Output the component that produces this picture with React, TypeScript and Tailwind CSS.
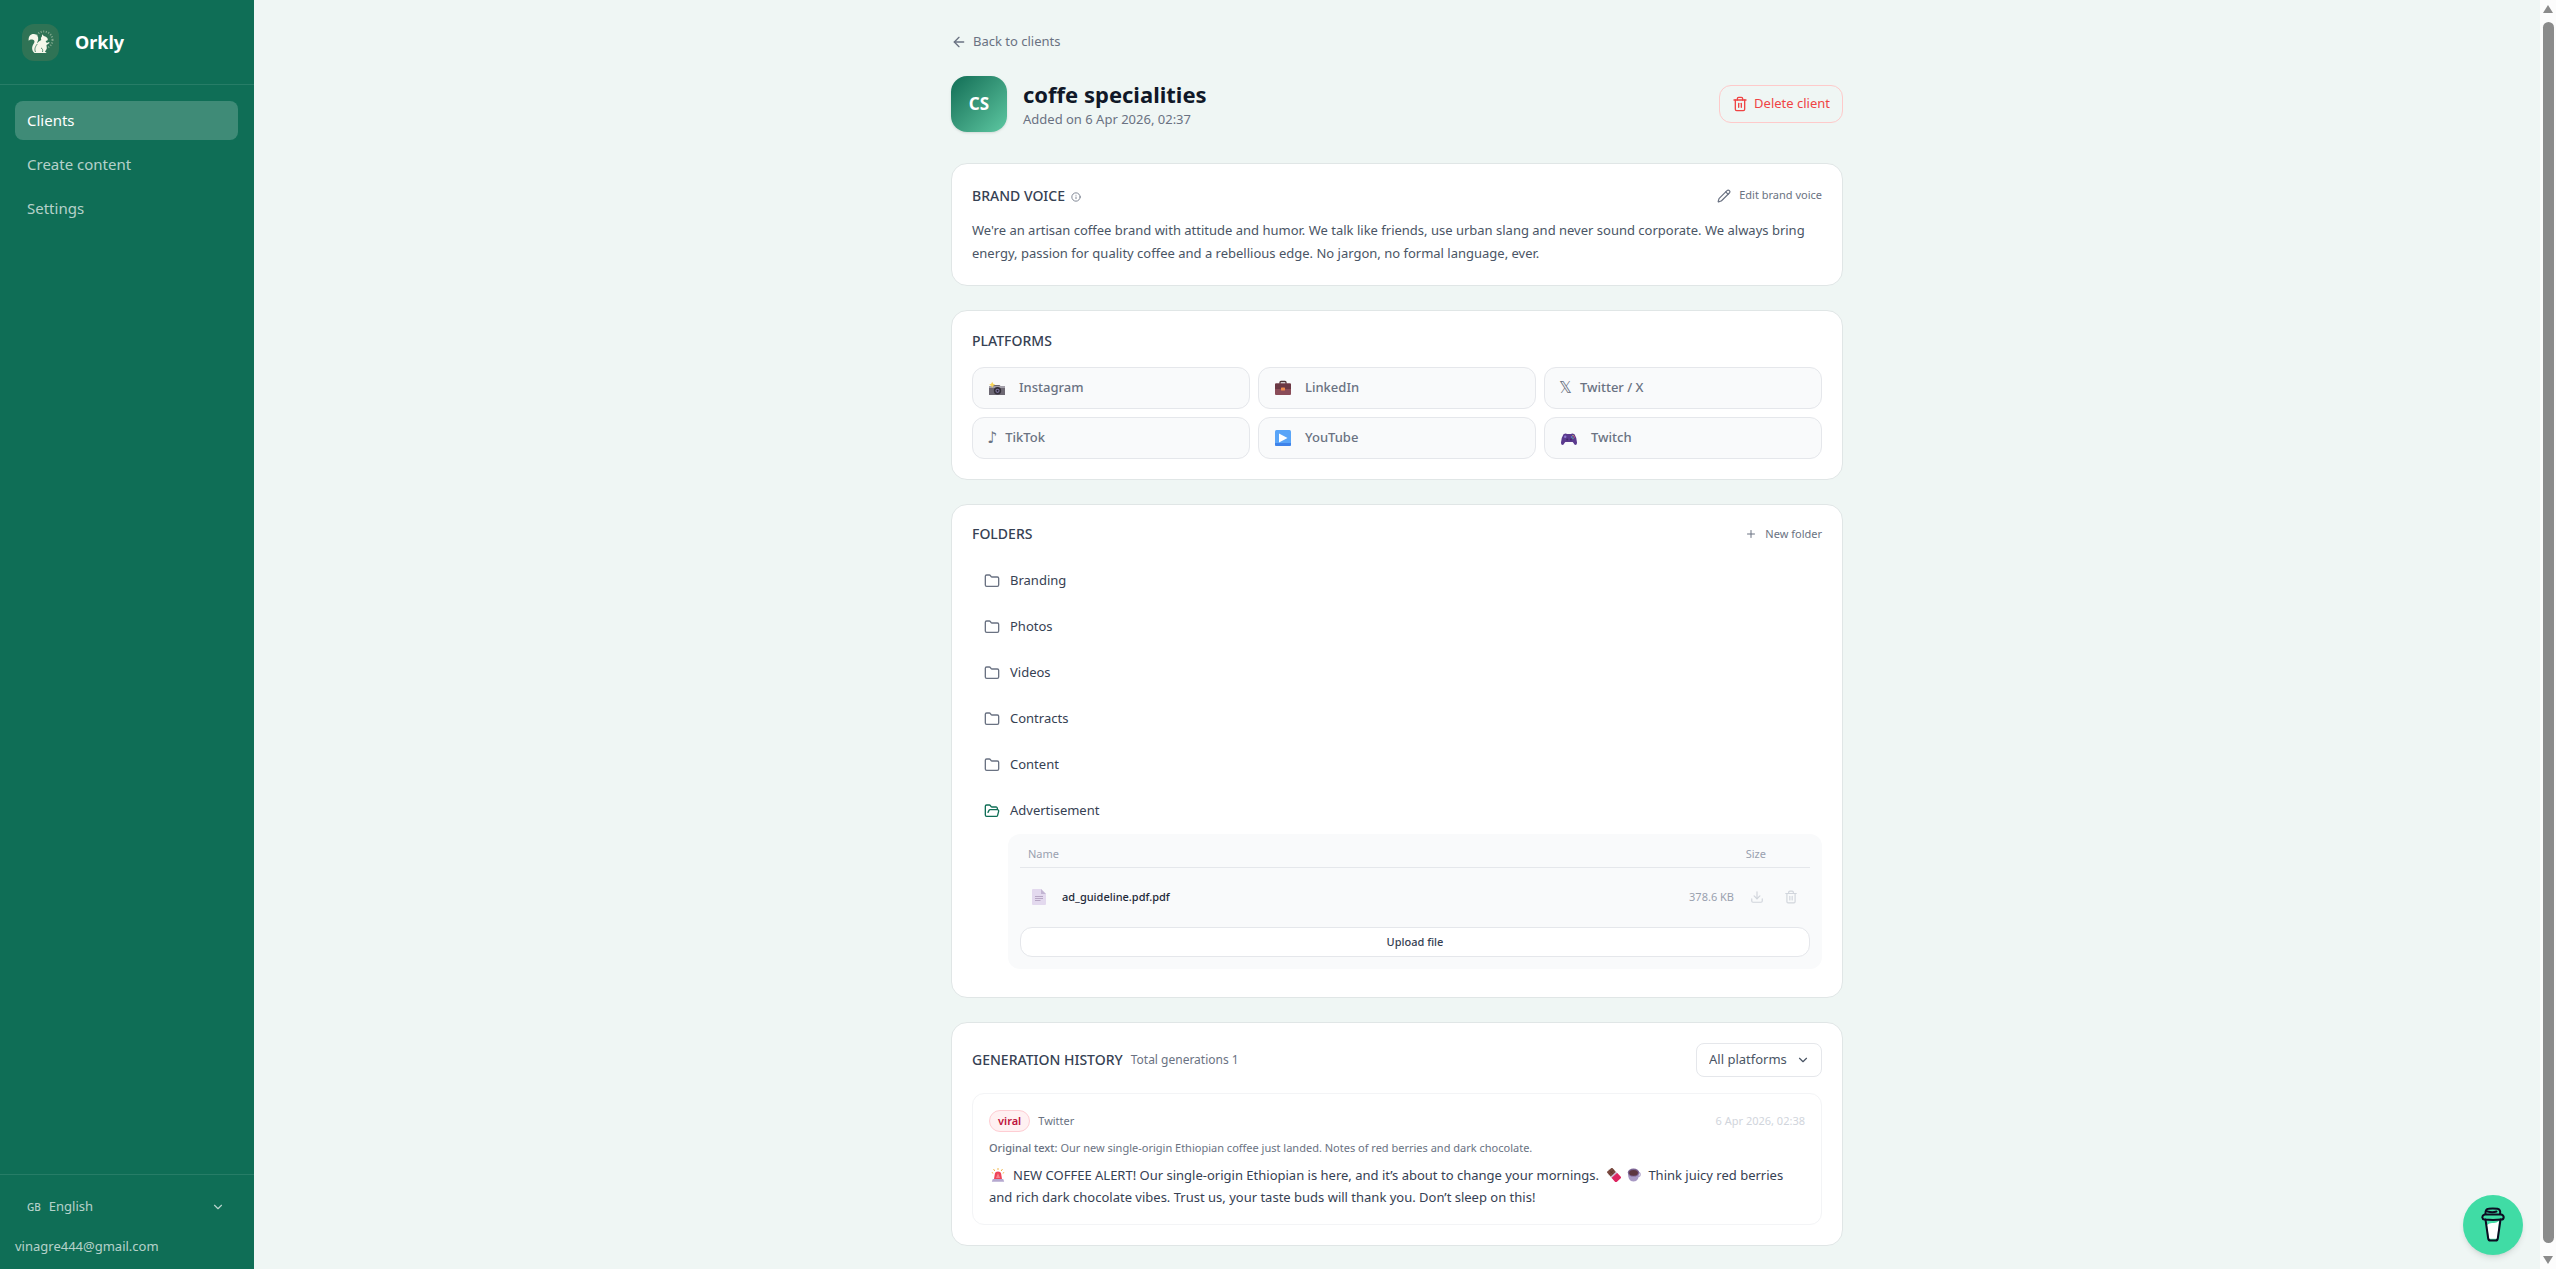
import type { ReactNode } from "react";
import {
  ArrowLeft,
  ChevronDown,
  Download,
  Folder,
  FolderOpen,
  Info,
  Pencil,
  Plus,
  Trash2,
} from "lucide-react";

function SquirrelLogo() {
  return (
    <svg viewBox="0 0 37 37" className="size-[37px]" aria-hidden="true">
      <rect width="37" height="37" rx="12" fill="#2f7355" />
      <circle cx="22" cy="16" r="8.500" fill="none" stroke="#b9cdb4" strokeWidth="2" strokeDasharray="1 1.600" strokeOpacity=".6" />
      <path
        d="M12.500 29c-3-2.500-3-6.500-.7-9.500 1.200-2 .8-3.300-.8-3.800-2-.4-3.300.2-4.300 1.100C6.200 12.500 8.500 9.800 12 10c3 .3 4.500 2.500 4.200 5.200-.2 1.800-1 3-1.200 4.300 1-1.500 2.500-2.800 4.300-3.500-.6-1.300-.4-2.700.6-3.500l.3-2.200 1.600 1.600c2.200.4 3.700 1.600 4 3.300.1 1-.8 1.600-2.200 1.700l1.200 2.200 2.300-1 .4 1-3 1.800.2 2.600c0 1.800-.8 3-1.800 4l1.800 1.500Z"
        fill="#f6f7ea"
      />
      <path d="M13.500 28c-1.500-3 .2-6 1.800-8M19 24c1.500.5 2 2 1.500 4" fill="none" stroke="#2f7355" strokeWidth=".8" />
    </svg>
  );
}

function CameraEmoji() {
  return (
    <svg viewBox="0 0 16 16" className="size-4" aria-hidden="true">
      <path d="M0 6h3.500l1-1h6l1 1H16v9H0z" fill="#6d6873" />
      <path d="M0 6h16v2H0z" fill="#a39fa9" />
      <circle cx="8.500" cy="10.800" r="3.700" fill="#35313b" />
      <circle cx="8.500" cy="10.800" r="2.100" fill="#8078a0" />
      <circle cx="8.500" cy="10.800" r="1" fill="#24202c" />
      <path d="M3.200 1.800l1 2 2 1-2 1-1 2-1-2-2-1 2-1z" fill="#f8d65a" />
    </svg>
  );
}

function BriefcaseEmoji() {
  return (
    <svg viewBox="0 0 16 16" className="size-4" aria-hidden="true">
      <path d="M5 4V2.500Q5 1.500 6 1.500h4q1 0 1 1V4" fill="none" stroke="#4e3537" strokeWidth="1.300" />
      <rect y="3.500" width="16" height="11.500" rx="1" fill="#8a4c58" />
      <path d="M0 4.500q0-1 1-1h14q1 0 1 1V9H0z" fill="#6b3844" />
      <rect x="6" y="7.500" width="4" height="3" rx=".6" fill="#ef8a4b" />
    </svg>
  );
}

function PlayEmoji() {
  return (
    <svg viewBox="0 0 16 16" className="size-4" aria-hidden="true">
      <rect width="16" height="16" rx="1.500" fill="#5aa5f8" />
      <path d="M0 13h16v1.500q0 1.500-1.500 1.500h-13Q0 16 0 14.500z" fill="#3f83ea" />
      <path d="M4 3.500v9L12.500 8z" fill="#fff" />
    </svg>
  );
}

function GamepadEmoji() {
  return (
    <svg viewBox="0 0 16 16" className="size-4" aria-hidden="true">
      <path d="M2.500 4.200Q5 2.800 6 4h4q1-1.200 3.500.2Q15.500 7 16 12.500q.1 2.500-1.600 2.500-1 0-1.900-1.900L11.600 12H4.400l-.9 1.100Q2.600 15 1.600 15-.1 15 0 12.500.5 7 2.500 4.200z" fill="#5b3a8e" />
      <circle cx="4.200" cy="6.800" r="1.200" fill="#8f7bd0" />
      <circle cx="6.200" cy="9.400" r="1" fill="#402a6b" />
      <circle cx="9.900" cy="9.400" r="1" fill="#402a6b" />
      <circle cx="12" cy="5.600" r=".7" fill="#e9c85a" />
      <circle cx="13.200" cy="7" r=".7" fill="#e5567b" />
      <circle cx="10.800" cy="7" r=".7" fill="#4fb0ea" />
      <circle cx="12" cy="8.200" r=".7" fill="#58c08a" />
    </svg>
  );
}

function SirenEmoji() {
  return (
    <svg viewBox="0 0 14 14" className="mr-2 ml-0.5 inline-block size-[14px] align-[-2px]" role="img" aria-label="Siren">
      <path d="M7 0v2M2.500 1l1.300 2M11.500 1l-1.300 2M.8 4.500l1.500.7M13.200 4.500l-1.500.7" stroke="#f0b84d" strokeWidth="1" />
      <path d="M3 11l.9-5.500Q4.200 3.500 7 3.500t3.100 2L11 11z" fill="#ee4458" />
      <path d="M7 5l2 5H5z" fill="#f9828b" />
      <path d="M1.800 11h10.400l1 2.800H.8z" fill="#b5a8cf" />
    </svg>
  );
}

function ChocolateEmoji() {
  return (
    <svg viewBox="0 0 14 14" className="mr-1.5 ml-2 inline-block size-[14px] align-[-2px]" role="img" aria-label="Chocolate bar">
      <g transform="rotate(-42 7 7)">
        <rect x="3.500" y="0" width="7" height="6.500" rx=".8" fill="#7a4a40" />
        <path d="M3.500 3.200h7M7 0v6.500" stroke="#5c342c" strokeWidth=".7" />
        <rect x="3.200" y="6" width="7.600" height="2" fill="#c9bfd6" />
        <rect x="3.200" y="7.500" width="7.600" height="6.500" rx=".6" fill="#dd2560" />
      </g>
    </svg>
  );
}

function CoffeeEmoji() {
  return (
    <svg viewBox="0 0 14 14" className="mr-1 inline-block size-[14px] align-[-2px]" role="img" aria-label="Hot beverage">
      <circle cx="11" cy="6.500" r="2.200" fill="none" stroke="#b3a6cc" strokeWidth="1.200" />
      <path d="M1 4.500h11q.5 9-5.500 9T1 4.500z" fill="#a899c4" />
      <ellipse cx="6.500" cy="4.600" rx="5.700" ry="4" fill="#7b6391" />
      <ellipse cx="6.500" cy="4.800" rx="4.500" ry="2.900" fill="#5d3740" />
    </svg>
  );
}

function PageEmoji() {
  return (
    <svg viewBox="0 0 14 16" className="h-4 w-[14px]" aria-hidden="true">
      <path d="M0 1q0-1 1-1h8l5 5v10q0 1-1 1H1q-1 0-1-1z" fill="#e3d9ee" />
      <path d="M9 0l5 5H9z" fill="#c3b5d3" />
      <path d="M3 7.500h8M3 9.500h8M3 11.500h5.500" stroke="#b7a6c4" strokeWidth="1" />
    </svg>
  );
}

function CupIcon() {
  return (
    <svg viewBox="0 0 24 36" className="h-9 w-6" fill="none" stroke="#0d0c22" strokeWidth="2" strokeLinecap="round" strokeLinejoin="round" aria-hidden="true">
      <path d="M6 18q3-2.500 6-2t6-2l-1.800 17.700H8z" fill="#fff" stroke="none" />
      <path d="M4.500 12.500l2.700 19q.3 2 2.300 2h5q2 0 2.300-2l2.700-19" />
      <path d="M3.500 7.500h17q2.300 1 2.200 3-.3 2-2.200 2-8.500.8-17 0-2-.3-2.200-2.200 0-2 2.200-2.800z" />
      <path d="M4.500 6.500Q4.300 2 7.500 1.700q4-.6 9 0Q20 2.500 19 7M6.500 4.500q5 1.300 9 0" />
    </svg>
  );
}

function Card({ children }: { children: ReactNode }) {
  return (
    <section className="rounded-2xl border border-[#e0e6e6] bg-white p-5">{children}</section>
  );
}

function CardTitle({ children }: { children: ReactNode }) {
  return <h2 className="text-sm font-medium text-gray-700 uppercase">{children}</h2>;
}

const platforms: { name: string; icon: ReactNode; emoji: boolean }[] = [
  { name: "Instagram", icon: <CameraEmoji />, emoji: true },
  { name: "LinkedIn", icon: <BriefcaseEmoji />, emoji: true },
  { name: "Twitter / X", icon: "𝕏", emoji: false },
  { name: "TikTok", icon: "♪", emoji: false },
  { name: "YouTube", icon: <PlayEmoji />, emoji: true },
  { name: "Twitch", icon: <GamepadEmoji />, emoji: true },
];

const folders = ["Branding", "Photos", "Videos", "Contracts", "Content", "Advertisement"];

function Sidebar() {
  return (
    <aside className="flex w-[254px] shrink-0 flex-col bg-[#0f6e56] text-white/70">
      <div className="flex h-[85px] items-center gap-4 border-b border-white/10 px-[22px]">
        <SquirrelLogo />
        <span className="text-lg font-bold text-white">Orkly</span>
      </div>
      <nav className="flex flex-1 flex-col gap-[5px] pt-4 pr-4 pl-[15px] text-[15px]">
        <a href="#clients" className="flex h-[39px] items-center rounded-lg bg-white/20 px-3 text-white">
          Clients
        </a>
        <a href="#create" className="flex h-[39px] items-center rounded-lg px-3">
          Create content
        </a>
        <a href="#settings" className="flex h-[39px] items-center rounded-lg px-3">
          Settings
        </a>
      </nav>
      <div className="flex flex-col border-t border-white/10 px-[15px] pt-3 pb-3 text-[13px]">
        <div className="relative flex h-10 items-center gap-2 pl-3">
          <span className="text-[10px] font-medium">GB</span>
          <select aria-label="Language" className="flex-1 appearance-none bg-transparent outline-none">
            <option>English</option>
          </select>
          <ChevronDown className="pointer-events-none absolute right-3.5 size-3.5" />
        </div>
        <span className="mt-2 leading-[22px]">vinagre444@gmail.com</span>
      </div>
    </aside>
  );
}

function FilesPanel() {
  return (
    <div className="ml-9 rounded-xl bg-[#f9fafb] px-3 pt-2 pb-3">
      <table className="w-full border-collapse text-xs">
        <thead>
          <tr className="h-[25px] border-b border-gray-200 text-[11px] text-gray-400">
            <th className="pl-2 text-left font-normal">Name</th>
            <th colSpan={2} className="pr-11 text-right font-normal">
              Size
            </th>
          </tr>
        </thead>
        <tbody>
          <tr className="h-[60px]">
            <td className="pl-3">
              <span className="flex items-center gap-4 text-[11px] font-medium text-gray-800">
                <PageEmoji />
                ad_guideline.pdf.pdf
              </span>
            </td>
            <td className="w-20 pr-2 text-right text-[11px] text-gray-400">378.6 KB</td>
            <td className="w-[68px]">
              <span className="flex justify-end gap-5 pr-3 text-gray-300">
                <button type="button" aria-label="Download file">
                  <Download className="size-3.5" />
                </button>
                <button type="button" aria-label="Delete file">
                  <Trash2 className="size-3.5" />
                </button>
              </span>
            </td>
          </tr>
        </tbody>
      </table>
      <button
        type="button"
        className="flex h-[30px] w-full items-center justify-center rounded-xl border border-gray-200 bg-white text-[11px] font-medium text-gray-700"
      >
        Upload file
      </button>
    </div>
  );
}

export default function App() {
  return (
    <div className="flex min-h-screen bg-[#eff6f4] font-['Noto_Sans','Open_Sans',sans-serif]">
      <Sidebar />
      <main className="min-w-0 flex-1 px-6 pt-8 pb-[22px]">
        <div className="mx-auto max-w-[892px]">
          <a href="#clients" className="flex h-5 w-fit items-center gap-1.5 text-[13px] text-gray-500">
            <ArrowLeft className="size-4" />
            Back to clients
          </a>
          <header className="mt-6 mb-[31px] flex items-center gap-4">
            <div className="flex size-14 items-center justify-center rounded-2xl bg-linear-to-br from-[#0f6e56] to-[#5dc8a2] text-[17px] font-bold text-white shadow-sm">
              CS
            </div>
            <div className="flex-1">
              <h1 className="text-[22px] leading-[30px] font-bold text-gray-900">coffe specialities</h1>
              <p className="text-[13px] leading-5 text-gray-500">Added on 6 Apr 2026, 02:37</p>
            </div>
            <button
              type="button"
              className="flex h-[38px] items-center gap-1.5 rounded-xl border border-[#fecaca] px-3 text-[13px] text-[#ef4444]"
            >
              <Trash2 className="size-4" />
              Delete client
            </button>
          </header>

          <div className="flex flex-col gap-6">
            <Card>
              <div className="flex h-[23px] items-center justify-between">
                <div className="flex items-center gap-1.5">
                  <CardTitle>Brand voice</CardTitle>
                  <Info className="mt-0.5 size-2.5 text-gray-500" />
                </div>
                <button type="button" className="flex items-center gap-2 text-[11px] text-gray-500">
                  <Pencil className="size-3.5" />
                  Edit brand voice
                </button>
              </div>
              <p className="mt-3 text-[13px] leading-[23px] text-gray-600">
                We're an artisan coffee brand with attitude and humor. We talk like friends, use urban slang and never
                sound corporate. We always bring energy, passion for quality coffee and a rebellious edge. No jargon, no
                formal language, ever.
              </p>
            </Card>

            <Card>
              <div className="flex h-5 items-center">
                <CardTitle>Platforms</CardTitle>
              </div>
              <ul className="mt-4 grid grid-cols-3 gap-2">
                {platforms.map((p) => (
                  <li
                    key={p.name}
                    className="flex h-[42px] items-center rounded-xl border border-gray-200 bg-[#f9fafb] px-3 text-[13px] font-medium text-gray-500"
                  >
                    {p.emoji ? (
                      <span className="mr-3.5 ml-1">{p.icon}</span>
                    ) : (
                      <span className="mr-2 ml-0.5 font-['DejaVu_Sans',sans-serif] text-base font-normal">{p.icon}</span>
                    )}
                    {p.name}
                  </li>
                ))}
              </ul>
            </Card>

            <Card>
              <div className="flex h-[18px] items-center justify-between">
                <CardTitle>Folders</CardTitle>
                <button type="button" className="flex items-center gap-2 text-[11px] text-gray-500">
                  <Plus className="size-3" />
                  New folder
                </button>
              </div>
              <div className="mt-[15px] pb-2">
                <ul>
                  {folders.map((name) => {
                    const open = name === "Advertisement";
                    return (
                      <li key={name}>
                        <button
                          type="button"
                          aria-expanded={open}
                          className="flex h-[46px] w-full items-center gap-2.5 px-3 text-[13px] text-gray-700"
                        >
                          {open ? (
                            <FolderOpen className="size-4 text-[#0f6e56]" />
                          ) : (
                            <Folder className="size-4 text-gray-500" />
                          )}
                          {name}
                        </button>
                      </li>
                    );
                  })}
                </ul>
                <FilesPanel />
              </div>
            </Card>

            <Card>
              <div className="flex h-[34px] items-center justify-between">
                <div className="flex items-center gap-2">
                  <CardTitle>Generation history</CardTitle>
                  <span className="text-xs text-gray-500">Total generations 1</span>
                </div>
                <div className="relative flex h-full items-center text-gray-600">
                  <select
                    aria-label="Filter by platform"
                    className="h-full w-[126px] appearance-none rounded-lg border border-gray-200 bg-white px-3 text-[13px] outline-none"
                  >
                    <option>All platforms</option>
                  </select>
                  <ChevronDown className="pointer-events-none absolute right-3 size-3.5" />
                </div>
              </div>
              <article className="mt-4 rounded-xl border border-gray-100 p-4">
                <div className="flex h-[22px] items-center gap-2 text-[11px]">
                  <span className="flex h-[22px] items-center rounded-full border border-[#fecdd3] bg-[#fff1f2] px-2 font-semibold text-[#be123c]">
                    viral
                  </span>
                  <span className="text-gray-500">Twitter</span>
                  <time className="ml-auto text-gray-300">6 Apr 2026, 02:38</time>
                </div>
                <p className="mt-1.5 text-[11px] leading-5 text-gray-500">
                  <strong className="font-medium">Original text:</strong> Our new single-origin Ethiopian coffee just
                  landed. Notes of red berries and dark chocolate.
                </p>
                <p className="mt-1.5 text-[13px] leading-[22px] text-gray-700">
                  <SirenEmoji />
                  NEW COFFEE ALERT! Our single-origin Ethiopian is here, and it’s about to change your mornings.
                  <ChocolateEmoji />
                  <CoffeeEmoji /> Think juicy red berries and rich dark chocolate vibes. Trust us, your taste buds will
                  thank you. Don’t sleep on this!
                </p>
              </article>
            </Card>
          </div>
        </div>
      </main>

      <div className="flex w-4 shrink-0 flex-col items-center justify-between bg-[#fcfcfc] py-1" aria-hidden="true">
        <svg viewBox="0 0 12 10" className="h-2.5 w-3">
          <path d="M6 1l5 8H1z" fill="#8b8b8b" />
        </svg>
        <div className="mt-2 mb-3 w-[11px] flex-1 rounded-full bg-[#8b8b8b]" />
        <svg viewBox="0 0 12 10" className="h-2.5 w-3">
          <path d="M6 9l5-8H1z" fill="#8b8b8b" />
        </svg>
      </div>

      <a
        href="#coffee"
        aria-label="Buy a coffee"
        className="fixed right-[33px] bottom-3.5 flex size-[60px] items-center justify-center rounded-full bg-[#40dca5] shadow-md"
      >
        <CupIcon />
      </a>
    </div>
  );
}
